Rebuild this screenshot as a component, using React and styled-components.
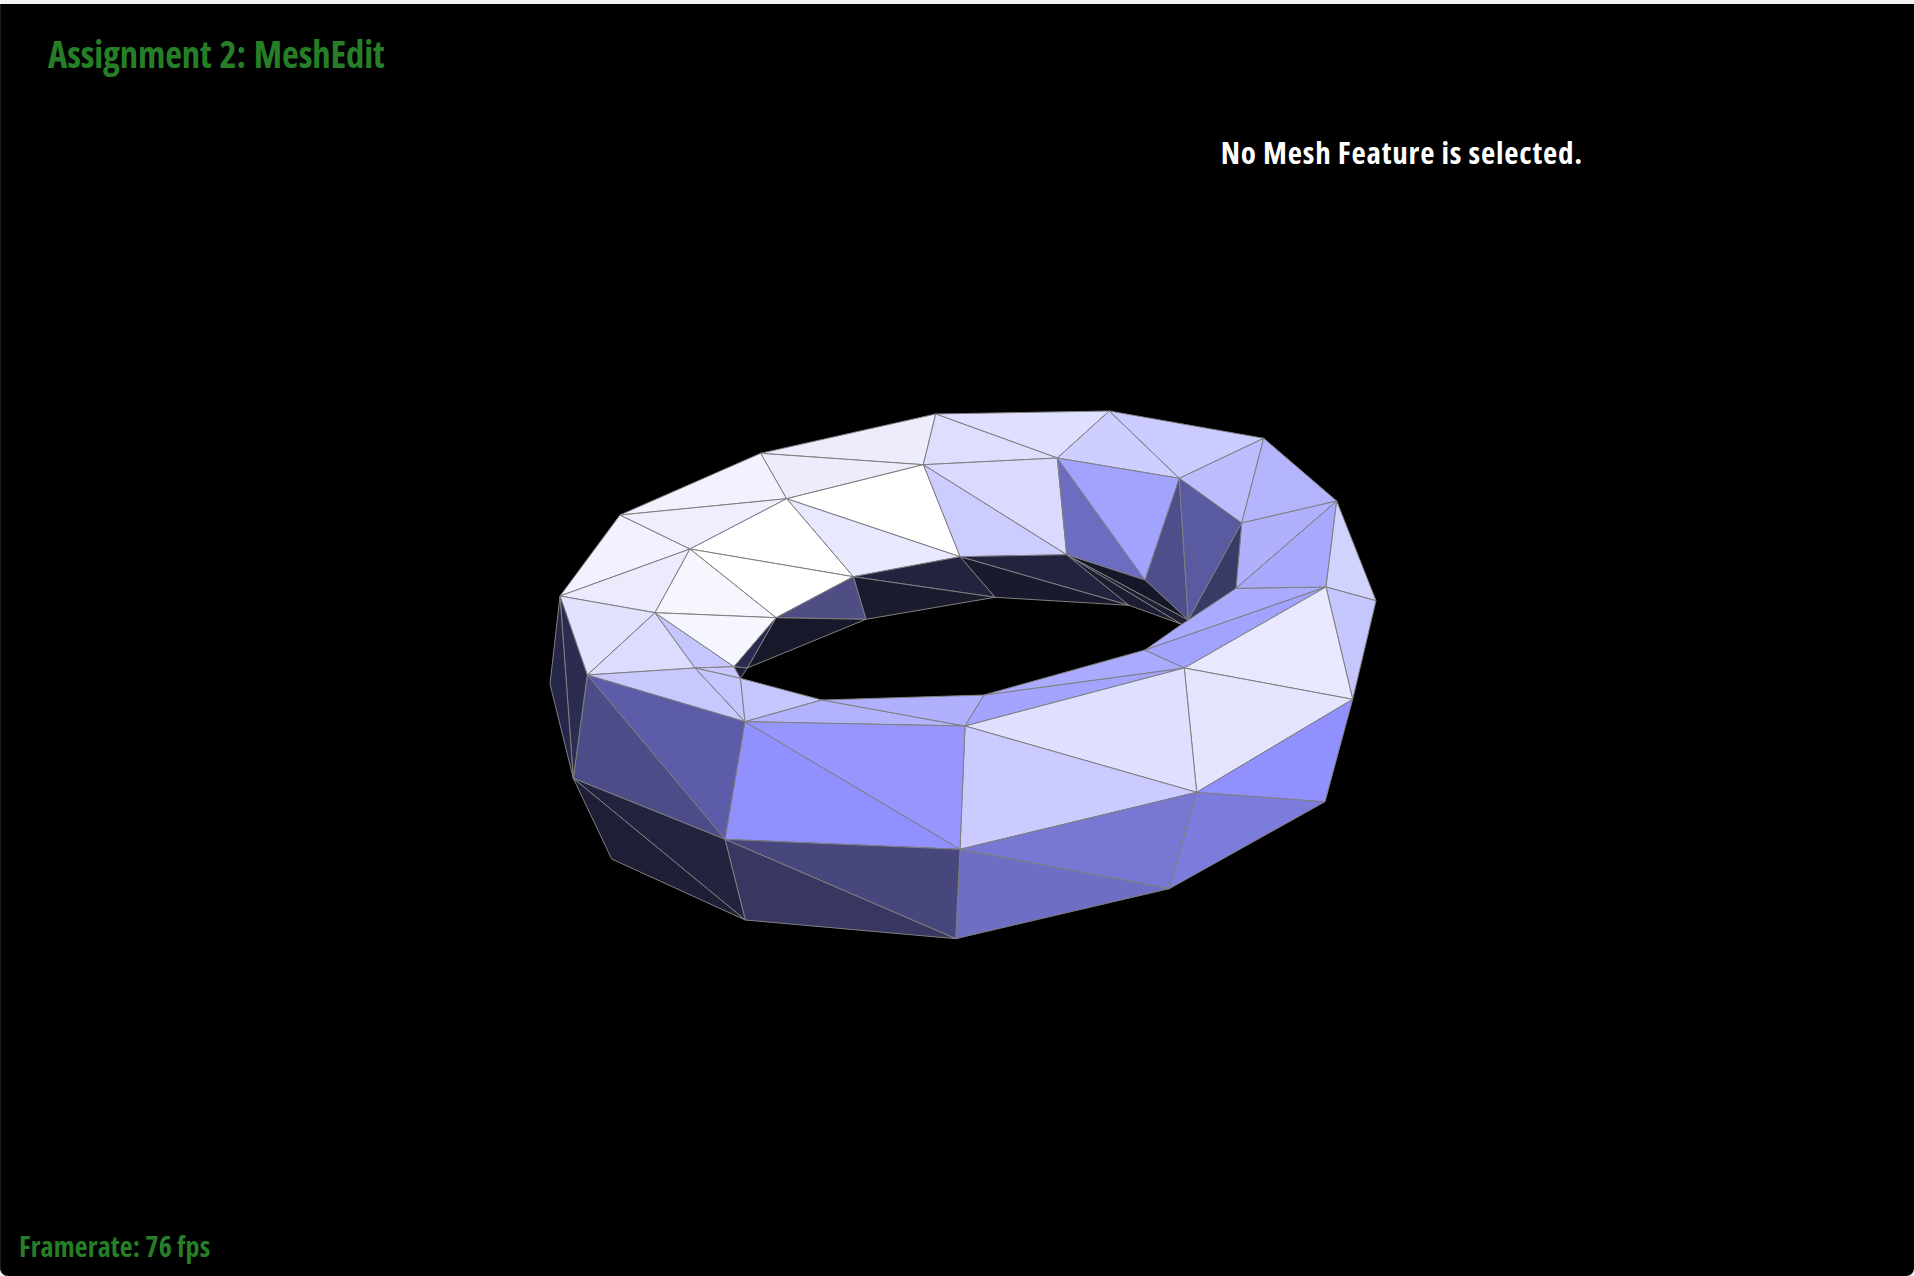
import React from 'react'
import styled, { createGlobalStyle } from 'styled-components'

const GlobalStyle = createGlobalStyle`
html, body {
  margin: 0;
  padding: 0;
  background: #f2f2f2;
}
`

const Window = styled.div`
width: 1914px;
height: 1276px;
padding-top: 4px;
box-sizing: border-box;
overflow: hidden;
`
const Viewport = styled.div`
height: 1272px;
background-color: #000000;
border-left: 1px solid #1c1c1c;
border-radius: 0 0 8px 8px;
box-sizing: border-box;
display: grid;
grid-template-rows: 401px 540px 1fr;
font-family: "Open Sans", "Noto Sans", sans-serif;
font-stretch: 75%;
font-weight: 700;
`
const Hud = styled.div`
display: flex;
align-items: flex-start;
justify-content: space-between;
`
const Title = styled.div`
margin: 26px 0 0 47px;
font-size: 36.7px;
line-height: 48px;
letter-spacing: -0.15px;
word-spacing: 1.5px;
color: #267f26;
`
const Status = styled.div`
margin: 128px 331px 0 0;
font-size: 31px;
font-stretch: 81%;
letter-spacing: 0.8px;
line-height: 40px;
color: #ffffff;
`
const Mesh = styled.svg`
display: block;
margin-left: 533px;
`
const Footer = styled.div`
display: flex;
align-items: flex-end;
padding: 0 0 12px 18px;
font-size: 28px;
font-stretch: 77%;
letter-spacing: 0.15px;
line-height: 36px;
color: #267f26;
`

const P = {
  o1: [560, 596], o2: [620, 515], o3: [760.7, 453.3], o4: [935.7, 414], o5: [1109.3, 411], o6: [1263.7, 438.3],
  o7: [1336.7, 501], o8: [1376, 600.7], o9: [1352.7, 699.3], o10: [1325, 801.7], o11: [1169.3, 888.7],
  o12: [955.7, 938.7], o13: [745.3, 920], o14: [611.7, 859], o15: [573.3, 778.3], o16: [550, 684],
  a1: [690, 549], a2: [786.7, 498.7], a3: [923.3, 464.7], a4: [1057.3, 458], a5: [1179.3, 478.3], a6: [1241.7, 523],
  a7: [1236, 588.3], a8: [1326, 587],
  b1: [655, 612.7], b2: [776, 617.7], b3: [853.3, 576.7], b4: [960, 556.7], b5: [1066.7, 554.7], b6: [1145, 580],
  b7: [1188.3, 620],
  c1: [866, 619.3], c2: [995, 597.3], c3: [1129, 605.3], c4: [1181.7, 624.3], c5: [747.3, 668], c6: [734, 666.7],
  c7: [740.5, 678.3],
  d1: [695, 668], d2: [587.3, 675], d3: [821.7, 700], d4: [745, 721.7], d5: [965, 726], d6: [984, 695],
  d7: [1145, 650], d8: [1184.3, 668],
  e1: [725, 839.3], e2: [960, 849.3], e3: [1196.7, 792.3],
}

const FACES = [
  ['o1 o2 a1', '#f1f1ff'], ['o2 o3 a2', '#f2f2ff'], ['o2 a2 a1', '#eeeefe'], ['o3 o4 a3', '#ececfd'],
  ['o3 a3 a2', '#ececfd'], ['o4 o5 a4', '#dfdfff'], ['o4 a4 a3', '#dedefe'], ['a3 a4 b5', '#dadaff'],
  ['a3 b5 b4', '#ccccff'], ['a2 a3 b4', '#ffffff'], ['a2 b4 b3', '#e8e8fe'], ['a1 a2 b3', '#ffffff'],
  ['a1 b3 b2', '#ffffff'], ['o1 a1 b1', '#ebebfd'], ['a1 b2 b1', '#f6f6ff'], ['o1 b1 d2', '#e2e2fe'],
  ['b1 d1 d2', '#dcdcff'], ['b1 c6 d1', '#c6c6ff'], ['b1 b2 c6', '#f6f6ff'], ['d1 c6 c7', '#c8c8ff'],
  ['d2 d1 d4', '#c8c8ff'], ['d1 c7 d4', '#c6c6ff'], ['c7 d3 d4', '#c6c6ff'], ['d4 d3 d5', '#b3b3fd'],
  ['d3 d6 d5', '#b0b0ff'], ['d6 d8 d5', '#a4a4ff'], ['d6 d7 d8', '#aaaaff'], ['c4 a7 a8 d7', '#aaaaff'],
  ['d7 a8 d8', '#a2a2ff'], ['o5 a5 a4', '#cfcfff'], ['o5 o6 a5', '#cbcbff'], ['o6 a6 a5', '#bcbcff'],
  ['o6 o7 a6', '#b4b4fc'], ['o7 a7 a6', '#b0b0fd'], ['o7 a8 a7', '#a8a8fd'], ['o7 o8 a8', '#d2d2fe'],
  ['a8 o8 o9', '#c6c6ff'], ['d8 a8 o9', '#e8e8ff'], ['d8 o9 e3', '#e4e4ff'], ['d5 d8 e3', '#dfdfff'],
  ['d5 e3 e2', '#cbcbff'], ['e2 e3 o11', '#7878d4'], ['e3 o10 o11', '#7c7cdd'], ['e3 o9 o10', '#9090ff'],
  ['e2 o11 o12', '#6e6ec4'], ['d4 d5 e2', '#9696fe'], ['d4 e2 e1', '#9090ff'], ['e1 e2 o12', '#47477d'],
  ['e1 o12 o13', '#373762'], ['d2 d4 e1', '#5c5ca8'], ['d2 e1 o15', '#4c4c88'], ['o15 e1 o13', '#232340'],
  ['o15 o13 o14', '#1e1e36'], ['o1 d2 o15', '#2c2c50'], ['o1 o15 o16', '#26264a'],
  ['a4 b5 b6', '#6c6cc0'], ['a4 a5 b6', '#a2a2ff'], ['a5 b6 b7', '#4e4e8a'], ['a5 a6 b7', '#5a5aa0'],
  ['a6 a7 b7', '#3a3a66'], ['b4 b5 c3', '#232340'], ['b4 c3 c2', '#1a1a2e'], ['b3 b4 c2', '#232340'],
  ['b3 c2 c1', '#1b1b2e'], ['b2 b3 c1', '#4e4e85'], ['b2 c1 c5', '#18182b'], ['b2 c5 c6', '#2b2b50'],
  ['c6 c5 c7', '#1f1f38'], ['b5 c3 c4', '#1c1c32'], ['b5 c4 b7', '#1e1e34'], ['b5 b6 b7', '#17172a'],
]

const ORIGIN = [534, 405]

const toPoints = (names) =>
  names
    .split(' ')
    .map((n) => `${P[n][0] - ORIGIN[0]},${P[n][1] - ORIGIN[1]}`)
    .join(' ')

const App = () => {
  return (
    <Window>
      <GlobalStyle />
      <Viewport>
        <Hud>
          <Title>Assignment 2: MeshEdit</Title>
          <Status>No Mesh Feature is selected.</Status>
        </Hud>
        <Mesh width="860" height="540" viewBox="0 0 860 540">
          {FACES.map(([names, fill]) => (
            <polygon key={names} points={toPoints(names)} fill={fill} stroke="#808080" strokeWidth="1" strokeLinejoin="round" />
          ))}
        </Mesh>
        <Footer>Framerate: 76 fps</Footer>
      </Viewport>
    </Window>
  )
}

export default App
